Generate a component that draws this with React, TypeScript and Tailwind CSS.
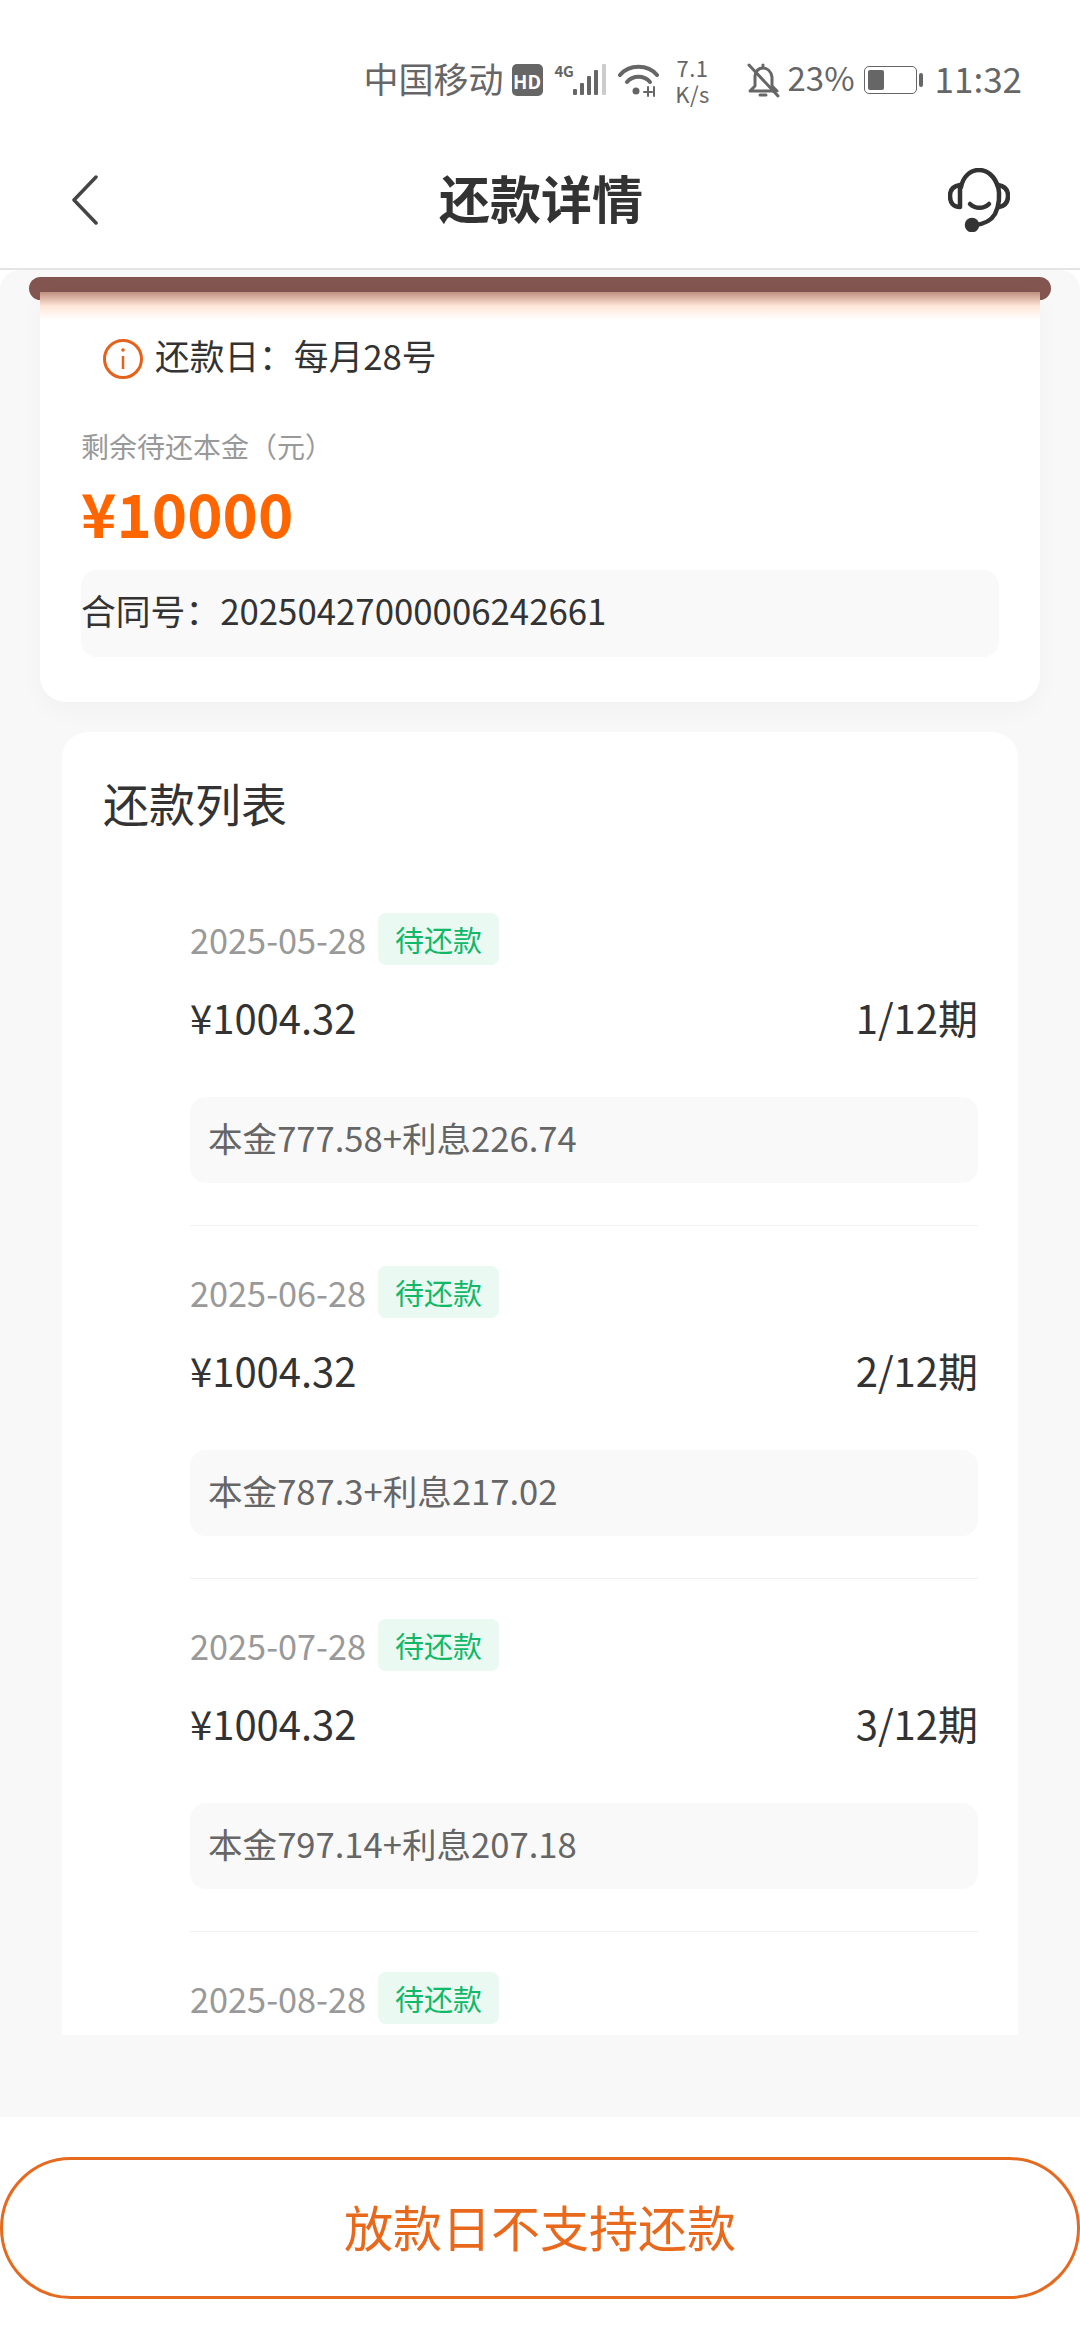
const rows = [
  { date: "2025-05-28", period: "1/12期", detail: "本金777.58+利息226.74" },
  { date: "2025-06-28", period: "2/12期", detail: "本金787.3+利息217.02" },
  { date: "2025-07-28", period: "3/12期", detail: "本金797.14+利息207.18" },
];

function DateRow({ date }: { date: string }) {
  return (
    <div className="flex h-[52px] items-center">
      <span className="text-[34.3px] leading-none text-[#999]">{date}</span>
      <span className="ml-[12px] flex h-[52px] w-[121px] items-center justify-center rounded-[8px] bg-[#eaf9f2] text-[29px] leading-none text-[#10b868]">待还款</span>
    </div>
  );
}

function StatusIcons() {
  return (
    <>
      <div className="ml-[8px] flex h-[32px] w-[31px] items-center justify-center rounded-[5px] bg-[#666] text-[19px] font-bold leading-none text-white">HD</div>
      <div className="relative ml-[12px] h-[34px] w-[53px]">
        <span className="absolute left-0 top-0 text-[15px] font-bold leading-none tracking-[-0.5px] text-[#666]">4G</span>
        <svg className="h-[34px] w-[53px]" viewBox="0 0 53 34">
          <g fill="#666">
            <rect x="18" y="26" width="4" height="6" rx="1" />
            <rect x="25" y="20" width="4" height="12" rx="1" />
            <rect x="32" y="13" width="4" height="19" rx="1" />
            <rect x="39" y="7" width="4" height="25" rx="1" />
          </g>
          <rect x="47" y="1" width="4" height="31" rx="1" fill="#ccc" />
        </svg>
      </div>
      <svg className="ml-[10px] h-[34px] w-[41px]" viewBox="0 0 41 34" fill="none" stroke="#666" strokeWidth="4" strokeLinecap="round">
        <path d="M2 12C11 1 30 1 39 12" />
        <path d="M9 19C15 12 26 12 32 19" />
        <circle cx="18" cy="28" r="3.5" fill="#666" stroke="none" />
        <path d="M30 24v9M26 29h8M36 24v9" strokeWidth="2" />
      </svg>
      <div className="ml-[15px] flex w-[38px] flex-col items-center text-[22px] leading-[26px] tracking-[0.5px] text-[#666]">
        <span>7.1</span>
        <span>K/s</span>
      </div>
      <svg className="ml-[35px] h-[37px] w-[33px]" viewBox="0 0 33 37" fill="none" stroke="#666" strokeWidth="3" strokeLinecap="round" strokeLinejoin="round">
        <path d="M16 3v3M8 14C9 8 12 6 16 6S24 9 25 15V24L30 29H3L8 24V14Z" />
        <path d="M13 33h6" />
        <path d="M2 3L31 34" />
      </svg>
      <span className="mb-[6px] ml-[8px] text-[33px] leading-none text-[#666]">23%</span>
      <div className="ml-[9px] flex items-center">
        <div className="h-[28px] w-[53px] rounded-[5px] border border-[#666] p-[3px]">
          <div className="h-full w-[16px] rounded-[2px] bg-[#666]" />
        </div>
        <div className="ml-[2px] h-[14px] w-[4px] rounded-full bg-[#666]" />
      </div>
    </>
  );
}

function Headset() {
  return (
    <svg className="h-[64px] w-[62px]" viewBox="0 0 62 64" fill="none" stroke="#333" strokeWidth="4.5" strokeLinecap="round" strokeLinejoin="round">
      <path d="M13 19C15 9 22 2 31 2S47 9 50 19" />
      <path d="M12 17C5 18 2 22 2 28S5 39 12 39Z" />
      <path d="M50 17C57 18 60 22 60 28S57 38 51 39" />
      <path d="M50 17C52 27 51 38 47 46C43 53 36 56 27 57" />
      <path d="M22 36C27 41 36 41 41 36" />
      <circle cx="24" cy="57" r="5" fill="#333" />
    </svg>
  );
}

export default function App() {
  return (
    <div className="flex h-[2340px] w-[1080px] flex-col overflow-hidden bg-white font-['Noto_Sans_CJK_SC','Noto_Sans',sans-serif]">
      <div className="flex h-[132px] items-center justify-end pr-[58px] pt-[28px]">
        <span className="mb-[6px] text-[35px] leading-none text-[#666]">中国移动</span>
        <StatusIcons />
        <span className="mb-[6px] ml-[12px] text-[35px] leading-none text-[#666]">11:32</span>
      </div>

      <div className="grid h-[138px] grid-cols-[1fr_auto_1fr] items-center border-b-2 border-[#e4e4e4] pl-[72px] pr-[70px]">
        <svg className="h-[50px] w-[26px]" viewBox="0 0 26 50" fill="none" stroke="#444" strokeWidth="3.5" strokeLinecap="round" strokeLinejoin="round">
          <path d="M24 2L2 25L24 48" />
        </svg>
        <h1 className="mb-[6px] text-[51px] font-bold leading-none text-[#333]">还款详情</h1>
        <div className="flex justify-end">
          <Headset />
        </div>
      </div>

      <main className="flex-1 rounded-t-[20px] bg-[#f8f8f8] pt-[7px]">
        <div className="mx-[29px] h-[23px] rounded-full bg-[#835550]" />

        <section className="relative mx-[40px] -mt-[8px] h-[410px] rounded-b-[26px] bg-white shadow-[0_8px_24px_rgba(0,0,0,0.03)]">
          <div className="h-[28px] bg-linear-to-b from-[#c09080] via-[#ffe6d8] to-white" />
          <div className="mt-[18px] flex h-[40px] items-center pl-[63px]">
            <svg className="mt-[2px] h-[40px] w-[40px] shrink-0" viewBox="0 0 40 40" fill="none" stroke="#e5621c">
              <circle cx="20" cy="20" r="18.5" strokeWidth="3" />
              <path d="M20 17V30" strokeWidth="2.5" />
              <circle cx="20" cy="11" r="1.8" fill="#e5621c" stroke="none" />
            </svg>
            <span className="mb-[6px] ml-[12px] text-[34.7px] leading-none text-[#333]">还款日：每月28号</span>
          </div>
          <div className="ml-[41px] mt-[48px] text-[28px] leading-[40px] text-[#999]">剩余待还本金（元）</div>
          <div className="ml-[41px] mt-[10px] text-[60px] font-bold leading-[72px] text-[#ff6600]">¥10000</div>
          <div className="mx-[41px] mt-[22px] flex h-[87px] items-center rounded-[16px] bg-[#f9f9f9] pb-[6px] text-[34.8px] leading-none text-[#333]">
            合同号：20250427000006242661
          </div>
        </section>

        <section className="mx-[62px] mt-[30px] h-[1303px] overflow-hidden rounded-t-[26px] bg-white pl-[41px] pr-[40px] pt-[38px]">
          <h2 className="text-[46px] font-normal leading-[64px] text-[#333]">还款列表</h2>
          <div className="mt-[39px] pl-[87px]">
            {rows.map((row) => (
              <div key={row.date} className="h-[353px] border-b border-[#f1f1f1] pt-[40px]">
                <DateRow date={row.date} />
                <div className="mt-[27px] flex h-[56px] items-center justify-between pb-[6px] text-[40px] leading-none text-[#333]">
                  <span>¥1004.32</span>
                  <span>{row.period}</span>
                </div>
                <div className="mt-[49px] flex h-[86px] items-center rounded-[16px] bg-[#f9f9f9] pb-[6px] pl-[18px] text-[34.6px] leading-none text-[#666]">
                  {row.detail}
                </div>
              </div>
            ))}
            <div className="pt-[40px]">
              <DateRow date="2025-08-28" />
            </div>
          </div>
        </section>
      </main>

      <footer className="h-[223px] shrink-0 bg-white pt-[40px]">
        <button className="flex h-[142px] w-full items-center justify-center rounded-[71px] border-[3px] border-[#e56a1f] pb-[6px] text-[49px] leading-none text-[#e8681c]">
          放款日不支持还款
        </button>
      </footer>
    </div>
  );
}
